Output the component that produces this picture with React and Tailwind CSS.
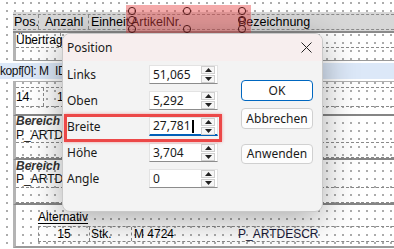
import React from "react";

function Spinner() {
  return (
    <div className="flex flex-col gap-[1px] pr-[2px] py-[1px]">
      <div className="w-[14px] h-[8px] border border-[#cfcfcf] bg-[#f6f6f6] flex items-center justify-center">
        <svg width="7" height="4" viewBox="0 0 7 4"><path d="M0 4 L3.5 0 L7 4 Z" fill="#222" /></svg>
      </div>
      <div className="w-[14px] h-[8px] border border-[#cfcfcf] bg-[#f6f6f6] flex items-center justify-center">
        <svg width="7" height="4" viewBox="0 0 7 4"><path d="M0 0 L7 0 L3.5 4 Z" fill="#222" /></svg>
      </div>
    </div>
  );
}

function Field({ label, value, focused }) {
  return (
    <div className="flex items-center h-[19px]">
      <div className="w-[82px] text-[12px] text-[#1a1a1a]">{label}</div>
      <div
        className={
          "w-[69px] h-[19px] bg-white flex items-center border border-[#e3e3e3] " +
          (focused ? "border-b-2 border-b-[#005fb8]" : "border-b-[#8c8c8c]")
        }
      >
        <div className="flex-1 pl-[3px] text-[12px] text-[#1a1a1a] flex items-center">
          {value}
          {focused && <span className="inline-block w-[2px] h-[13px] bg-black ml-[1px]" />}
        </div>
        <Spinner />
      </div>
    </div>
  );
}

function Dialog() {
  return (
    <div className="absolute left-[62px] top-[33px] w-[261px] h-[179px] rounded-[8px] border border-[#c9c9c9] bg-[#f3f3f3] shadow-[0_8px_34px_rgba(0,0,0,0.34)] font-['Noto_Sans','Open_Sans',sans-serif] overflow-hidden">
      <div className="h-[27px] bg-[#f7eeee] flex items-center justify-between pl-[4px] pr-[10px]">
        <span className="text-[12px] text-[#1a1a1a]">Position</span>
        <svg width="11" height="11" viewBox="0 0 11 11">
          <path d="M0.5 0.5 L10.5 10.5 M10.5 0.5 L0.5 10.5" stroke="#222" strokeWidth="1" />
        </svg>
      </div>
      <div className="flex pl-[4px] pt-[4px]">
        <div className="flex flex-col gap-[7px]">
          <Field label="Links" value="51,065" />
          <Field label="Oben" value="5,292" />
          <Field label="Breite" value="27,781" focused />
          <Field label="Höhe" value="3,704" />
          <Field label="Angle" value="0" />
        </div>
        <div className="flex flex-col ml-[23px] pt-[15px]">
          <div className="w-[72px] h-[21px] rounded-[4px] border border-[#0067c0] bg-white flex items-center justify-center text-[12px] text-[#1a1a1a]">OK</div>
          <div className="w-[72px] h-[21px] mt-[7px] rounded-[4px] border border-[#d0d0d0] bg-[#fdfdfd] flex items-center justify-center text-[12px] text-[#1a1a1a]">Abbrechen</div>
          <div className="w-[72px] h-[20px] mt-[15px] rounded-[4px] border border-[#d0d0d0] bg-[#fdfdfd] flex items-center justify-center text-[12px] text-[#1a1a1a]">Anwenden</div>
        </div>
      </div>
      <div className="absolute left-[1px] top-[80px] w-[158px] h-[28px] border-[3px] border-[#ec4848] shadow-[0_0_3px_rgba(236,72,72,0.5)]" />
    </div>
  );
}

export default function App() {
  return (
    <div className="relative w-[394px] h-[249px] overflow-hidden bg-white bg-[radial-gradient(circle,#8e8e8e_0.6px,transparent_1px)] bg-[length:8px_8px] bg-[position:3px_-1px] font-['Liberation_Sans',Arial,sans-serif] text-[12px] text-black leading-none">
      <div className="flex flex-col">
        <div className="h-[12px]" />
        {/* header band */}
        <div className="ml-[13px] h-[21px] bg-[#d7d7d7] border-b-2 border-[#8a8a8a] pt-[2px]">
          <div className="flex h-[16px] border-y border-dashed border-[#8a8a8a] text-[12.5px]">
            <div className="w-[26px] pl-[1px] flex items-center border-r border-dashed border-[#8a8a8a]">Pos.</div>
            <div className="w-[50px] pl-[6px] flex items-center border-r border-dashed border-[#8a8a8a]">Anzahl</div>
            <div className="w-[42px] pl-[2px] flex items-center">Einheit</div>
            <div className="w-[107px] pl-[0px] flex items-center">ArtikelNr.</div>
            <div className="flex-1 flex items-center">Bezeichnung</div>
          </div>
        </div>
        {/* Übertrag band */}
        <div className="ml-[13px] h-[28px] border-l-[3px] border-[#b4b4b4] border-b border-b-[#9a9a9a]">
          <div className="flex h-[15px] border-b border-dashed border-[#8a8a8a]">
            <div className="w-[45px] flex items-center border-r border-dashed border-[#8a8a8a] whitespace-nowrap">Übertrag</div>
          </div>
        </div>
        <div className="h-[2px]" />
        {/* blue band */}
        <div className="h-[16px] bg-[#dce8f8] flex items-center text-[#111]">
          <span className="w-[62px] overflow-hidden whitespace-nowrap tracking-[-0.4px]">kopf[0]: M_IDENT</span>
        </div>
        <div className="h-[2px]" />
        {/* band C */}
        <div className="ml-[13px] h-[35px] border-l-[3px] border-[#b4b4b4] border-t border-t-[#b0b0b0] border-b-2 border-b-[#858585] pt-[5px]">
          <div className="flex h-[20px] border-y border-dashed border-[#8a8a8a]">
            <div className="w-[28px] flex items-center border-r border-dashed border-[#8a8a8a]">14</div>
            <div className="w-[18px] pl-[13px] flex items-center overflow-hidden">1</div>
          </div>
        </div>
        {/* band D */}
        <div className="ml-[13px] h-[44px] border-l-[3px] border-[#b4b4b4] border-b-2 border-b-[#858585]">
          <div className="h-[10px] flex items-center italic font-bold text-[#333]">
            <span className="w-[46px] overflow-hidden whitespace-nowrap">Bereich Position</span>
          </div>
          <div className="flex h-[16px] mt-[1px] border-b border-dashed border-[#8a8a8a]">
            <div className="w-[46px] overflow-hidden whitespace-nowrap flex items-center text-[#111]">P_ARTDESCR</div>
          </div>
          <div className="h-[15px] border-b border-dashed border-[#8a8a8a]" />
        </div>
        {/* band E */}
        <div className="ml-[13px] h-[45px] border-l-[3px] border-[#b4b4b4] border-b-2 border-b-[#858585]">
          <div className="h-[11px] flex items-center italic font-bold text-[#333]">
            <span className="w-[46px] overflow-hidden whitespace-nowrap">Bereich Position</span>
          </div>
          <div className="flex h-[17px] border-b border-dashed border-[#8a8a8a]">
            <div className="w-[46px] overflow-hidden whitespace-nowrap flex items-center text-[#111]">P_ARTDESCR</div>
          </div>
          <div className="h-[15px] border-b border-dashed border-[#8a8a8a]" />
        </div>
        {/* band F */}
        <div className="ml-[13px] h-[43px] border-l-[3px] border-[#b4b4b4] border-b-2 border-b-[#9a9a9a]">
          <div className="h-[19px] pl-[22px] flex items-end pb-[1px]">
            <span className="underline underline-offset-[2px]">Alternativ</span>
          </div>
          <div className="flex h-[16px] mt-[2px] border-y border-dashed border-[#8a8a8a] ml-[22px]">
            <div className="w-[52px] flex items-center justify-center border-x border-dashed border-[#8a8a8a]">15</div>
            <div className="w-[42px] pl-[1px] flex items-center border-r border-dashed border-[#8a8a8a]">Stk.</div>
            <div className="w-[106px] pl-[2px] flex items-center">M 4724</div>
            <div className="flex-1 flex items-center text-[#1a1a3a]">P_ARTDESCR</div>
          </div>
        </div>
      </div>

      {/* selection */}
      <div className="absolute left-[126px] top-[5px] w-[125px] h-[30px] bg-[rgba(232,69,69,0.45)]" />
      <svg className="absolute left-0 top-0" width="394" height="40">
        {[[132, 11], [187, 11], [242, 11], [132, 20], [242, 20], [132, 29], [187, 29], [242, 29]].map(([x, y], i) => (
          <circle key={i} cx={x} cy={y} r="3.6" fill="none" stroke="#5a1c1c" strokeWidth="1" />
        ))}
      </svg>

      <Dialog />
    </div>
  );
}
